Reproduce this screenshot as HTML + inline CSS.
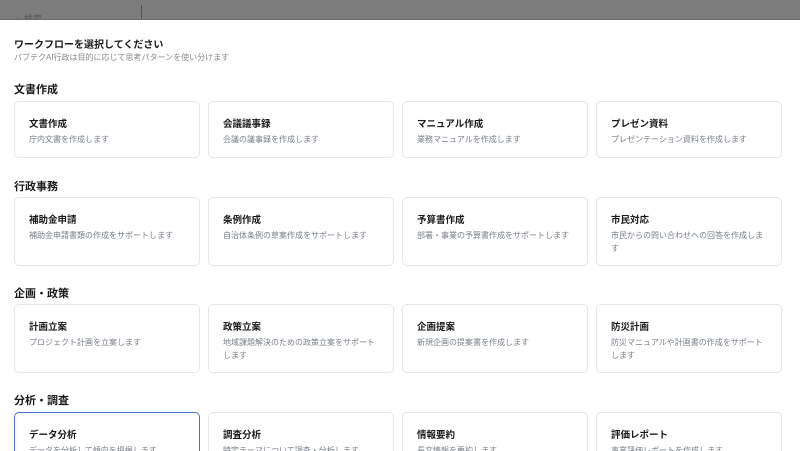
<!DOCTYPE html>
<html style="width:800px;height:451px;overflow:hidden"><head><meta charset="utf-8"><style>
*{margin:0;padding:0;box-sizing:border-box}
body{width:800px;height:451px;overflow:hidden;background:#fff;font-family:"Liberation Sans","Noto Sans CJK JP",sans-serif;position:relative;color:#1a1a1a}
.top{position:absolute;left:0;top:0;width:800px;height:20px;background:#7d7d7d;border-bottom:1px solid #6a6a6a;overflow:hidden}
.top .s{position:absolute;left:16px;top:12px;font-size:9px;color:#555}
.top .v{position:absolute;left:141px;top:5px;width:1px;height:15px;background:#555}
.t{position:absolute;left:14px;font-weight:bold}
.card{position:absolute;width:186px;border:1px solid #e3e6ea;border-radius:5px;background:#fff;overflow:hidden}
.card b{position:absolute;left:14px;top:14px;font-size:9.5px}
.card span{position:absolute;left:14px;top:31px;right:12px;font-size:8px;color:#7a808a;line-height:13px;white-space:normal}
.sel{border:1.5px solid #4a72c8}
.last{height:39px !important;border-bottom:none !important;border-bottom-left-radius:0;border-bottom-right-radius:0}
.last span{white-space:nowrap}
</style></head><body>
<div class="top"><div class="s">○ 検索</div><div class="v"></div></div>
<div class="t" style="top:36px;font-size:10px">ワークフローを選択してください</div>
<div class="t" style="top:52px;font-size:8px;color:#888;font-weight:normal">パブテクAI行政は目的に応じて思考パターンを使い分けます</div>

<div class="t" style="top:81px;font-size:11px">文書作成</div>
<div class="card" style="left:14px;top:101px;height:57px"><b>文書作成</b><span>庁内文書を作成します</span></div>
<div class="card" style="left:208px;top:101px;height:57px"><b>会議議事録</b><span>会議の議事録を作成します</span></div>
<div class="card" style="left:402px;top:101px;height:57px"><b>マニュアル作成</b><span>業務マニュアルを作成します</span></div>
<div class="card" style="left:596px;top:101px;height:57px"><b>プレゼン資料</b><span>プレゼンテーション資料を作成します</span></div>

<div class="t" style="top:178px;font-size:11px">行政事務</div>
<div class="card" style="left:14px;top:197px;height:69px"><b>補助金申請</b><span>補助金申請書類の作成をサポートします</span></div>
<div class="card" style="left:208px;top:197px;height:69px"><b>条例作成</b><span>自治体条例の草案作成をサポートします</span></div>
<div class="card" style="left:402px;top:197px;height:69px"><b>予算書作成</b><span>部署・事業の予算書作成をサポートします</span></div>
<div class="card" style="left:596px;top:197px;height:69px"><b>市民対応</b><span>市民からの問い合わせへの回答を作成します</span></div>

<div class="t" style="top:285px;font-size:11px">企画・政策</div>
<div class="card" style="left:14px;top:304px;height:69px"><b>計画立案</b><span>プロジェクト計画を立案します</span></div>
<div class="card" style="left:208px;top:304px;height:69px"><b>政策立案</b><span>地域課題解決のための政策立案をサポートします</span></div>
<div class="card" style="left:402px;top:304px;height:69px"><b>企画提案</b><span>新規企画の提案書を作成します</span></div>
<div class="card" style="left:596px;top:304px;height:69px"><b>防災計画</b><span>防災マニュアルや計画書の作成をサポートします</span></div>

<div class="t" style="top:392px;font-size:11px">分析・調査</div>
<div class="card sel last" style="left:14px;top:412px"><b>データ分析</b><span>データを分析して傾向を把握します</span></div>
<div class="card last" style="left:208px;top:412px"><b>調査分析</b><span>特定テーマについて調査・分析します</span></div>
<div class="card last" style="left:402px;top:412px"><b>情報要約</b><span>長文情報を要約します</span></div>
<div class="card last" style="left:596px;top:412px"><b>評価レポート</b><span>事業評価レポートを作成します</span></div>
</body></html>
